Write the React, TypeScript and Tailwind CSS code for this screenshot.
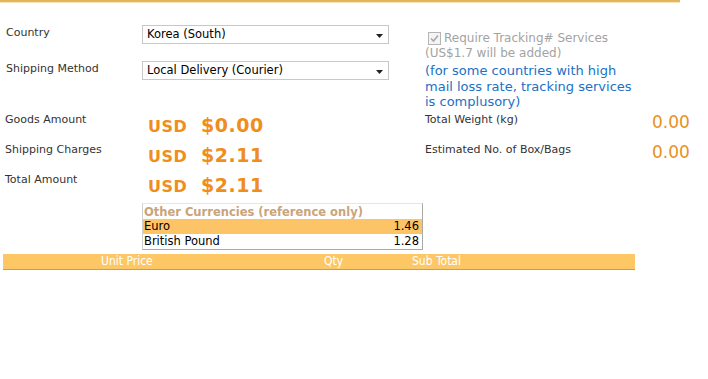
import React from "react";

const Arrow = () => (
  <svg width="7" height="4" viewBox="0 0 7 4" className="absolute right-[5px] top-[8px]">
    <path d="M0 0 H7 L3.5 4 Z" fill="#222" />
  </svg>
);

function Select({ value }: { value: string }) {
  return (
    <div className="relative w-[247px] h-[19px] border border-[#c8c8c8] bg-white pl-[4px] text-[11.5px] leading-[17px] text-black">
      {value}
      <Arrow />
    </div>
  );
}

export default function App() {
  return (
    <div className="w-[708px] h-[379px] bg-white font-['DejaVu_Sans',Verdana,sans-serif] text-[#333] relative">
      <div className="w-[680px] h-[2px] bg-[#e3b65a]" />
      <div className="w-[680px] h-[1px] bg-[#f6e7c2]" />
      {/* top section */}
      <div className="flex">
        <div className="w-[425px] pt-[22px] flex flex-col gap-[17px]">
          <div className="flex items-start">
            <div className="w-[142px] pl-[6px] text-[11px] leading-[13px] pt-[1px]">Country</div>
            <Select value="Korea (South)" />
          </div>
          <div className="flex items-start">
            <div className="w-[142px] pl-[6px] text-[11px] leading-[13px] pt-[1px]">Shipping Method</div>
            <Select value="Local Delivery (Courier)" />
          </div>
        </div>
        <div className="pt-[28px]">
          <div className="flex items-center gap-[3px] pl-[3px] h-[14px]">
            <div className="w-[13px] h-[13px] border border-[#b5b5b5] bg-[#f4f4f4] flex items-center justify-center">
              <svg width="9" height="9" viewBox="0 0 9 9">
                <path d="M1 4.5 L3.5 7 L8 1.5" stroke="#a8a8a8" strokeWidth="1.6" fill="none" />
              </svg>
            </div>
            <span className="text-[12px] text-[#a3a3a3]">Require Tracking# Services</span>
          </div>
          <div className="text-[12px] text-[#a3a3a3] leading-[15px] mt-[1px]">(US$1.7 will be added)</div>
          <div className="text-[13px] text-[#2170c6] leading-[15.5px] mt-[2px] w-[215px]">
            (for some countries with high mail loss rate, tracking services is complusory)
          </div>
        </div>
      </div>
      {/* amounts */}
      <div className="flex mt-[2px]">
        <div className="w-[420px] flex flex-col">
          {[
            ["Goods Amount", "$0.00"],
            ["Shipping Charges", "$2.11"],
            ["Total Amount", "$2.11"],
          ].map(([l, v]) => (
            <div key={l} className="flex h-[30px]">
              <div className="w-[148px] pl-[5px] text-[11px] leading-[13px] pt-[1px]">{l}</div>
              <div className="flex items-baseline -mt-[1px] text-[#ef8e1c] font-bold">
                <span className="text-[16px] w-[53px] tracking-[0.5px]">USD</span>
                <span className="text-[19px] tracking-[0.5px]">{v}</span>
              </div>
            </div>
          ))}
        </div>
        <div className="flex flex-col pl-[5px]">
          {["Total Weight (kg)", "Estimated No. of Box/Bags"].map((l) => (
            <div key={l} className="flex h-[30px]">
              <div className="w-[227px] text-[11px] leading-[13px] pt-[1px]">{l}</div>
              <div className="text-[17px] leading-[20px] text-[#e8911f]">0.00</div>
            </div>
          ))}
        </div>
      </div>
      {/* currencies */}
      <div className="ml-[142px] mt-[1px] w-[281px] border border-[#a9a9a9] border-t-[#e6e6e6] border-l-[#d0d0d0] text-[11.5px]">
        <div className="h-[15px] leading-[16px] pl-[1px] font-bold text-[11.5px] text-[#c9a47a]">Other Currencies (reference only)</div>
        <div className="h-[15px] leading-[15px] bg-[#fdc467] text-black flex justify-between px-[1px] pr-[3px]">
          <span>Euro</span>
          <span>1.46</span>
        </div>
        <div className="h-[15px] leading-[15px] text-black flex justify-between px-[1px] pr-[3px]">
          <span>British Pound</span>
          <span>1.28</span>
        </div>
      </div>
      {/* bottom bar */}
      <div className="ml-[3px] mt-[4px] w-[632px] h-[16px] bg-[#fec766] border-b border-[#b0a080] flex text-[12px] leading-[15px] text-white font-['DejaVu_Sans_Condensed','Liberation_Sans',sans-serif]">
        <span className="ml-[98px] w-[223px]">Unit Price</span>
        <span className="w-[88px]">Qty</span>
        <span>Sub Total</span>
      </div>
    </div>
  );
}
